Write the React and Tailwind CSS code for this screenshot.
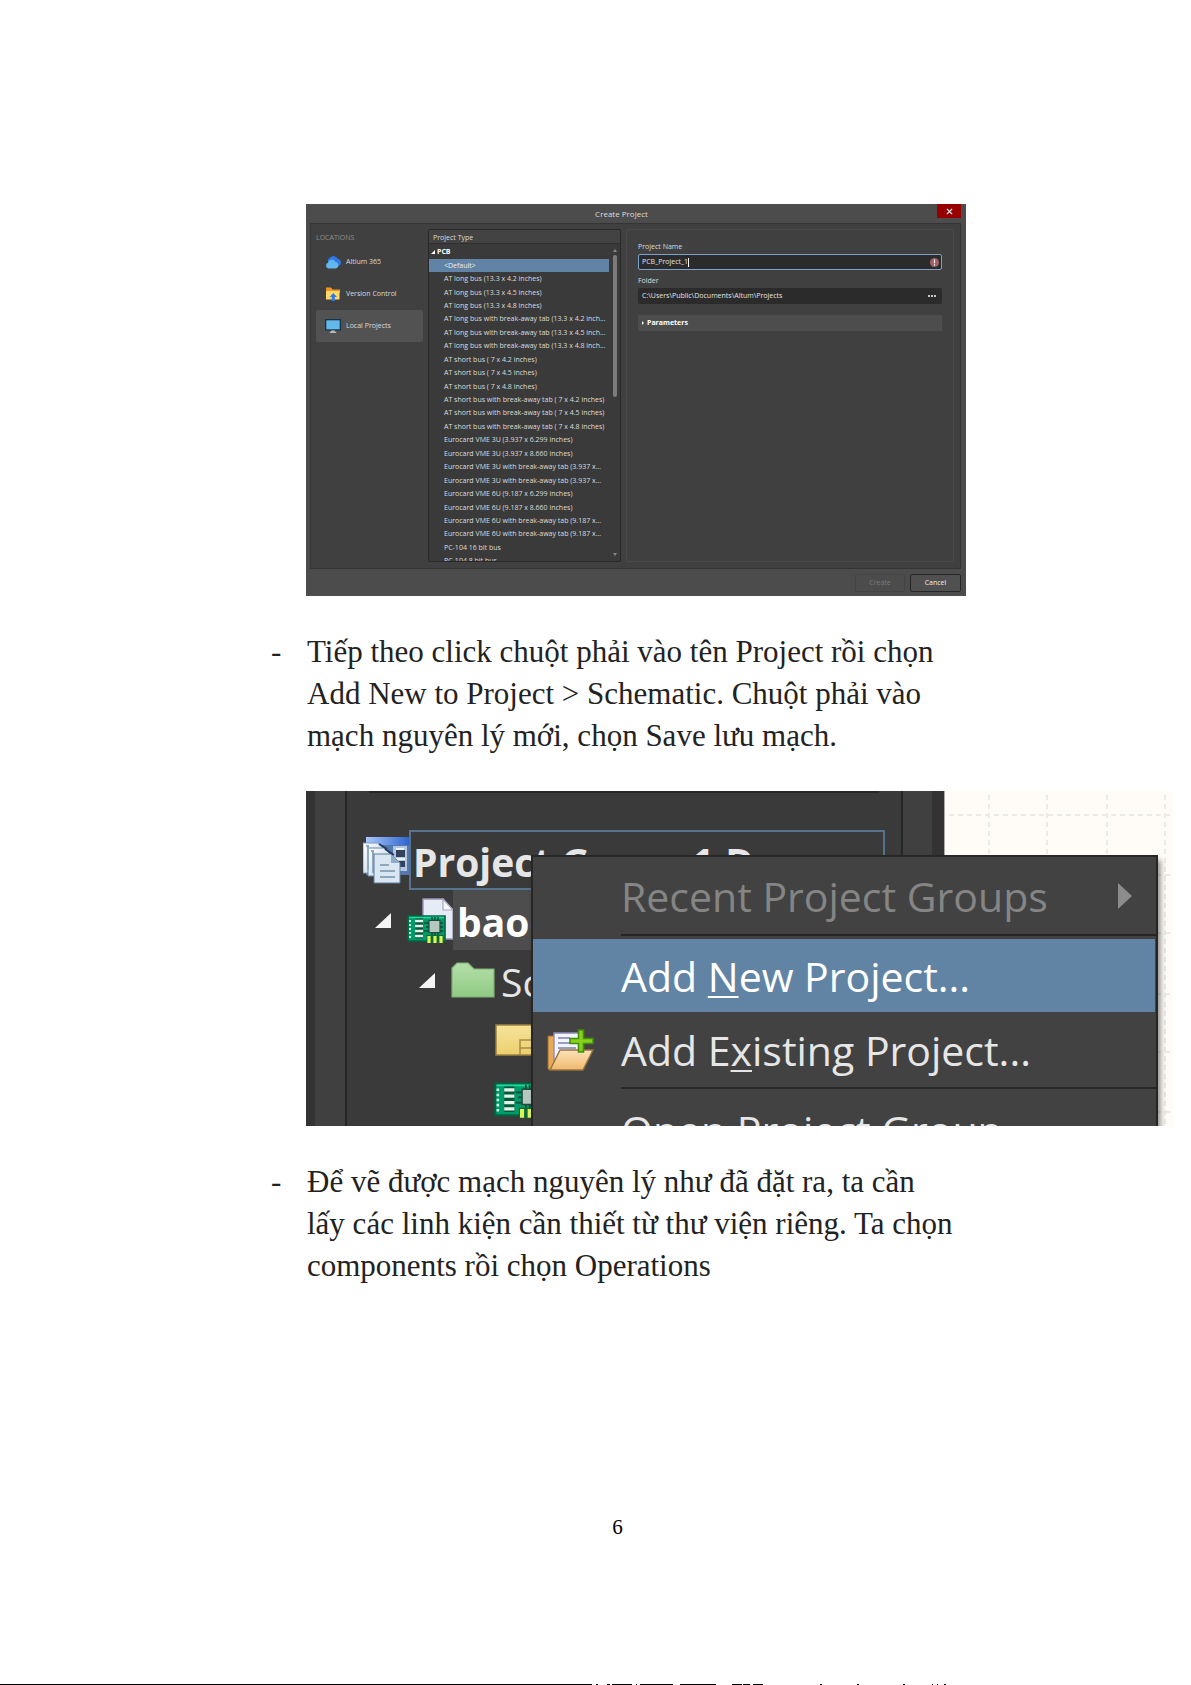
const boards = [
  "AT long bus (13.3 x 4.2 inches)",
  "AT long bus (13.3 x 4.5 inches)",
  "AT long bus (13.3 x 4.8 inches)",
  "AT long bus with break-away tab (13.3 x 4.2 inch...",
  "AT long bus with break-away tab (13.3 x 4.5 inch...",
  "AT long bus with break-away tab (13.3 x 4.8 inch...",
  "AT short bus ( 7 x 4.2 inches)",
  "AT short bus ( 7 x 4.5 inches)",
  "AT short bus ( 7 x 4.8 inches)",
  "AT short bus with break-away tab ( 7 x 4.2 inches)",
  "AT short bus with break-away tab ( 7 x 4.5 inches)",
  "AT short bus with break-away tab ( 7 x 4.8 inches)",
  "Eurocard VME 3U (3.937 x 6.299 inches)",
  "Eurocard VME 3U (3.937 x 8.660 inches)",
  "Eurocard VME 3U with break-away tab (3.937 x...",
  "Eurocard VME 3U with break-away tab (3.937 x...",
  "Eurocard VME 6U (9.187 x 6.299 inches)",
  "Eurocard VME 6U (9.187 x 8.660 inches)",
  "Eurocard VME 6U with break-away tab (9.187 x...",
  "Eurocard VME 6U with break-away tab (9.187 x...",
  "PC-104 16 bit bus",
  "PC-104 8 bit bus",
];

function CloudIcon() {
  return (
    <svg viewBox="0 0 16 14" className="h-[14px] w-4 shrink-0" aria-hidden="true">
      <path d="M4.500 9a3.600 3.600 0 0 1 .6-6.400A4.600 4.600 0 0 1 12.800 4 3.600 3.600 0 0 1 13.500 11H7z" fill="#2f78e6" />
      <path d="M3.200 13.500A3 3 0 0 1 3 7.800 4 4 0 0 1 10.400 6.700 3.500 3.500 0 0 1 11 13.500z" fill="#62b8ee" />
    </svg>
  );
}

function VersionIcon() {
  return (
    <svg viewBox="0 0 16 14" className="h-[14px] w-4 shrink-0" aria-hidden="true">
      <path d="M1 .5h5l1.500 2H15V6H1z" fill="#f0932b" />
      <path d="M1 4h13.500v8.500H1z" fill="#ffd766" />
      <path d="M8.300 6 12 10H9.800v4H6.800v-4H4.600z" fill="#2f7be8" />
    </svg>
  );
}

function MonitorIcon() {
  return (
    <svg viewBox="0 0 16 14" className="h-[14px] w-4 shrink-0" aria-hidden="true">
      <path d="M0 0h16v11.500H0z" fill="#123446" />
      <path d="M1.300 1.300h13.400v9H1.300z" fill="#63b8ec" />
      <path d="M6.300 11.500h3.400l.5 1.300h1V14H4.800v-1.200h1z" fill="#b9b9b9" />
    </svg>
  );
}

function GroupIcon() {
  return (
    <svg viewBox="0 0 47 47" className="-mr-px h-[47px] w-[47px] shrink-0" aria-hidden="true">
      <defs>
        <linearGradient id="bar" x1="0" x2="1">
          <stop offset="0" stopColor="#a9c8ff" />
          <stop offset="1" stopColor="#2d62cc" />
        </linearGradient>
        <linearGradient id="sheet" x1="0" x2="1" y2="1">
          <stop offset="0" stopColor="#fff" />
          <stop offset="1" stopColor="#b9cfe2" />
        </linearGradient>
      </defs>
      <path d="M3 0h44v38H3z" fill="#5379ae" />
      <path d="M3 0h44v8H3z" fill="url(#bar)" />
      <path d="M30 9h14v25H30z" fill="#b7c6e0" />
      <path d="M33 13h9v7h-9zM36 24h6v6h-6z" fill="#33415f" />
      <path d="M33 12h8M31 22h11" stroke="#eef4ff" strokeWidth="2" />
      <path d="M0 6h15l6 6v24H0z" fill="url(#sheet)" stroke="#7f9ab5" />
      <path d="M5 11h16l6 6v22H5z" fill="url(#sheet)" stroke="#6785a5" />
      <path d="M8 14h2v22M3 9h2v24" stroke="#8fa9c2" strokeWidth="2" fill="none" />
      <path d="M11 17h17l9 9v20H11z" fill="#dae7f2" stroke="#5f7d9d" />
      <path d="M28 17v9h9z" fill="#8eabc8" />
      <path d="M16 7l8 5M22 12l9 6" stroke="#243a5c" strokeWidth="2" />
      <path d="M17 28h9M17 34h15M17 40h15" stroke="#90a6bd" strokeWidth="2" />
    </svg>
  );
}

function Chip({ className }) {
  return (
    <svg viewBox="0 0 40 28" className={className} aria-hidden="true">
      <path d="M1 1h37v25H1z" fill="#009a6b" stroke="#00663f" strokeWidth="1.600" />
      <path d="M2 2.500h35" stroke="#25d6a5" strokeWidth="1.400" />
      <path d="M3 5v18" stroke="#caf3df" strokeWidth="2" strokeDasharray="2 2" />
      <path d="M8 6h8M8 11h8M8 16h8M8 21h8" stroke="#005a39" strokeWidth="5" />
      <path d="M8 6h8M8 11h8M8 16h8M8 21h8" stroke="#e2f2ea" strokeWidth="2.600" />
      <path d="M22 8h-5M22 12h-3M22 16h-5M36 8h-3M36 12h-3M36 16h-3M25 6V2M28 6V2M31 6V2M25 18v5M28 18v3M31 18v3" stroke="#004d33" strokeWidth="1.400" />
      <path d="M22 5.500h11v12H22z" fill="#b5c8c0" stroke="#29473c" strokeWidth="1.200" />
      <path d="M19.500 20h17v8h-17z" fill="#0c6b33" />
      <path d="M22 21v7M28 21v7M34 21v7" stroke="#dff25a" strokeWidth="3.200" />
    </svg>
  );
}

function PcbProjectIcon() {
  return (
    <span className="relative block h-[45px] w-[46px] shrink-0">
      <svg viewBox="0 0 46 45" className="h-full w-full" aria-hidden="true">
        <path d="M16 1h20l10 11v29H16z" fill="#e6ebf5" stroke="#9b95b8" strokeWidth="1.400" />
        <path d="M36 1v11h10z" fill="#f8f9ff" stroke="#a7a3c4" strokeWidth="1.200" />
      </svg>
      <Chip className="absolute bottom-0 left-0 h-[28px] w-10" />
    </span>
  );
}

function FolderIcon() {
  return (
    <svg viewBox="0 0 44 36" className="h-9 w-11 shrink-0" aria-hidden="true">
      <defs>
        <linearGradient id="leaf" x1="0" x2="0" y1="0" y2="1">
          <stop offset="0" stopColor="#b5dea9" />
          <stop offset="1" stopColor="#8fcb83" />
        </linearGradient>
      </defs>
      <path d="M1 35V6l5-5h11l6 6h20v28z" fill="url(#leaf)" stroke="#7fae74" strokeWidth="1.200" />
    </svg>
  );
}

function SheetIcon() {
  return (
    <svg viewBox="0 0 46 32" className="h-8 w-[46px] shrink-0" aria-hidden="true">
      <defs>
        <linearGradient id="sand" x1="0" x2="0" y1="0" y2="1">
          <stop offset="0" stopColor="#f6e29a" />
          <stop offset="1" stopColor="#ecd06e" />
        </linearGradient>
      </defs>
      <path d="M1 1h44v30H1z" fill="url(#sand)" stroke="#9a8143" strokeWidth="1.500" />
      <path d="M25 31V16h20M25 24h20" stroke="#a68b47" strokeWidth="1.500" fill="none" />
    </svg>
  );
}

function OpenFolderIcon() {
  return (
    <svg viewBox="0 0 47 42" className="h-[42px] w-[47px]" aria-hidden="true">
      <defs>
        <linearGradient id="manila" x1="0" x2="0" y1="0" y2="1">
          <stop offset="0" stopColor="#fbe3bb" />
          <stop offset="1" stopColor="#eeb96b" />
        </linearGradient>
      </defs>
      <path d="M1 7h7v28l-4 6-3-1z" fill="#e9a959" stroke="#9b6b2e" />
      <path d="M7 4h27v32H7z" fill="#f3f4fc" stroke="#8d8cb8" strokeWidth="1.400" />
      <path d="M11 9h12M11 14h18M11 19h18" stroke="#9a9cc8" strokeWidth="1.800" />
      <path d="M13 21h33L36 41H3z" fill="url(#manila)" stroke="#96713e" strokeWidth="1.400" />
      <path d="M31.500 1h5v8.500H46v5h-9.500V23h-5v-8.500H23v-5h8.500z" fill="#86cf1b" stroke="#438f08" strokeWidth="1.600" />
    </svg>
  );
}

function Expander() {
  return (
    <svg viewBox="0 0 16 15" className="h-[15px] w-4 shrink-0" aria-hidden="true">
      <path d="M16 0v15H0z" fill="#f4f4f4" />
    </svg>
  );
}

function CreateProjectDialog() {
  return (
    <section
      aria-label="Create Project"
      className="flex h-[392px] w-full max-w-[660px] flex-col bg-[#4c4c4c] font-['Open_Sans','Noto_Sans',sans-serif] text-[7px] leading-[10px] text-[#dcdcdc]"
    >
      <header className="flex h-[19px] shrink-0 pr-[5px]">
        <h2 className="flex-1 self-center text-center text-[8px]">Create Project</h2>
        <button type="button" aria-label="Close" className="flex h-[14px] w-6 items-center justify-center bg-[#980000]">
          <svg viewBox="0 0 8 8" className="size-[7px]" aria-hidden="true">
            <path d="m1 1 6 6M7 1 1 7" stroke="#fff" strokeWidth="1.300" />
          </svg>
        </button>
      </header>

      <div className="mx-1 mr-[5px] flex min-h-0 flex-1 border border-[#343434] bg-[#404040]">
        <nav aria-label="Locations" className="w-[117px] shrink-0 px-[5px] pt-[9px]">
          <h3 className="text-[#8f8f8f]">LOCATIONS</h3>
          <ul className="mt-[3px]">
            <li>
              <a href="#altium" className="flex h-8 items-center gap-[5px] pl-[9px]"><CloudIcon />Altium 365</a>
            </li>
            <li>
              <a href="#version" className="flex h-8 items-center gap-[5px] pl-[9px]"><VersionIcon />Version Control</a>
            </li>
            <li>
              <a href="#local" aria-current="page" className="flex h-8 items-center gap-[5px] rounded-[2px] bg-[#525252] pl-[9px]"><MonitorIcon />Local Projects</a>
            </li>
          </ul>
        </nav>

        <div className="mt-[5px] mb-[6px] flex w-[193px] shrink-0 flex-col rounded-[2px] border border-[#282828] bg-[#3a3a3a]">
          <h3 className="h-[14px] shrink-0 border-b border-[#303030] bg-[#434343] pt-[3px] pl-1">Project Type</h3>
          <div className="flex min-h-0 flex-1">
            <div className="min-w-0 flex-1 overflow-hidden">
              <p className="flex h-[15px] items-center gap-[2px] pl-[2px] font-bold text-white">
                <svg viewBox="0 0 4 4" className="size-1" aria-hidden="true"><path d="M4 0v4H0z" fill="#fff" /></svg>
                PCB
              </p>
              <ul className="grid h-[309px] auto-rows-fr">
                <li className="flex items-center bg-[#6183a5] pl-[15px] text-[#eee]">&lt;Default&gt;</li>
                {boards.map((name, i) => (
                  <li key={i} className="flex items-center pl-[15px] whitespace-nowrap">{name}</li>
                ))}
              </ul>
            </div>
            <div aria-hidden="true" className="flex w-[11px] shrink-0 flex-col items-center py-[5px]">
              <svg viewBox="0 0 4 3" className="h-[3px] w-1"><path d="M2 0 4 3H0z" fill="#888" /></svg>
              <div className="mt-[3px] h-[142px] w-1 rounded-full bg-[#7c7c7c]" />
              <svg viewBox="0 0 4 3" className="mt-auto h-[3px] w-1"><path d="M0 0h4L2 3z" fill="#888" /></svg>
            </div>
          </div>
        </div>

        <form className="mt-[5px] mr-[6px] mb-[6px] ml-[5px] flex min-w-0 flex-1 flex-col rounded-[2px] border border-[#4a4a4a] px-[11px] pt-3">
          <label htmlFor="project-name">Project Name</label>
          <div className="mt-[2px] flex h-4 items-center rounded-[2px] border border-[#7ba2c8] bg-[#2b2b2b] pr-[2px] pl-[3px]">
            <span className="flex min-w-0 flex-1 items-center">
              <input id="project-name" defaultValue="PCB_Project_1" className="field-sizing-content bg-transparent text-[#e2e2e2] outline-none" />
              <span aria-hidden="true" className="h-[9px] w-px bg-white" />
            </span>
            <svg viewBox="0 0 10 10" className="size-[9px]" role="img" aria-label="Error">
              <circle cx="5" cy="5" r="5" fill="#a06064" />
              <path d="M5 1.800v4M5 7v1.400" stroke="#fff" strokeWidth="1.300" />
            </svg>
          </div>
          <label htmlFor="project-folder" className="mt-[6px]">Folder</label>
          <div className="mt-[2px] flex h-4 items-center rounded-[2px] bg-[#2b2b2b] pr-[6px] pl-1">
            <input id="project-folder" defaultValue={"C:\\Users\\Public\\Documents\\Altum\\Projects"} className="min-w-0 flex-1 bg-transparent text-[#e2e2e2] outline-none" />
            <button type="button" aria-label="Browse" className="flex gap-px">
              <span className="size-[2px] rounded-full bg-white" />
              <span className="size-[2px] rounded-full bg-white" />
              <span className="size-[2px] rounded-full bg-white" />
            </button>
          </div>
          <button type="button" className="mt-[11px] flex h-4 items-center gap-[3px] bg-[#4d4d4d] pl-1 font-bold text-white">
            <svg viewBox="0 0 2 4" className="h-1 w-[2px]" aria-hidden="true"><path d="M0 0l2 2-2 2z" fill="#fff" /></svg>
            Parameters
          </button>
        </form>
      </div>

      <footer className="flex h-[27px] shrink-0 items-center justify-end gap-[5px] pt-px pr-[5px]">
        <button type="button" disabled className="h-[18px] w-[50px] rounded-[2px] border border-[#434343] text-[#7b7b7b]">Create</button>
        <button type="button" className="h-[18px] w-[51px] rounded-[2px] border border-[#262626] bg-[#505050] text-[#eee]">Cancel</button>
      </footer>
    </section>
  );
}

function ProjectMenu() {
  return (
    <div
      role="menu"
      className="absolute top-16 left-[225px] flex w-[627px] flex-col border-2 border-[#262626] bg-[#424242] text-[41px] text-[#e6e6e6] shadow-[3px_5px_5px_rgba(0,0,0,0.4)]"
    >
      <button type="button" role="menuitem" disabled className="flex h-[77px] items-center justify-between pr-6 pl-[88px] text-[#858585]">
        Recent Project Groups
        <svg viewBox="0 0 14 26" className="h-[26px] w-[14px]" aria-hidden="true"><path d="M0 0l14 13L0 26z" fill="#8c8c8c" /></svg>
      </button>
      <hr className="mb-[3px] ml-[88px] border-t-2 border-[#262626]" />
      <button type="button" role="menuitem" className="mr-px flex h-[73px] items-center bg-[#6284a4] pl-[88px] text-white">
        <span>Add <span className="underline decoration-2 underline-offset-4">N</span>ew Project...</span>
      </button>
      <button type="button" role="menuitem" className="flex h-[75px] items-center">
        <span className="flex w-[88px] shrink-0 pl-[14px]"><OpenFolderIcon /></span>
        <span>Add E<span className="underline decoration-2 underline-offset-4">x</span>isting Project...</span>
      </button>
      <hr className="ml-[88px] border-t-2 border-[#262626]" />
      <button type="button" role="menuitem" className="flex h-[78px] items-center pt-1 pl-[88px]">Open Project Group...</button>
    </div>
  );
}

function ContextMenuFigure() {
  return (
    <section
      aria-label="Projects panel"
      className="relative flex h-[335px] w-full max-w-[867px] overflow-hidden bg-[#fffcf8] font-['Open_Sans','Noto_Sans',sans-serif]"
    >
      <div className="w-[9px] shrink-0 bg-[#333]" />
      <div className="w-[30px] shrink-0 bg-[#404040]" />
      <div className="w-[558px] shrink-0 border-x-2 border-[#262626] bg-[#3a3a3a]">
        <div className="mx-[22px] h-[2px] bg-[#262626]" />
        <div className="mt-[37px] ml-4 flex h-[60px] items-center">
          <GroupIcon />
          <div className="flex h-[60px] w-[476px] items-center border-2 border-[#56728f] pt-1 pl-[2px] text-[39px] font-bold whitespace-nowrap text-[#e6e6e6]">
            Project Group 1.D...
          </div>
        </div>
        <div className="flex h-[60px] items-center pl-7">
          <Expander />
          <span className="ml-4"><PcbProjectIcon /></span>
          <div className="flex h-[60px] flex-1 items-center bg-[#4d4d4d] pt-1 pl-1 text-[39px] font-bold text-white">baoc</div>
        </div>
        <div className="flex h-[60px] items-center pl-[72px]">
          <Expander />
          <span className="ml-4"><FolderIcon /></span>
          <span className="ml-[6px] pt-1 text-[39px] text-[#e6e6e6]">Sc</span>
        </div>
        <div className="flex h-[60px] items-center pl-[148px]"><SheetIcon /></div>
        <div className="flex h-[60px] items-center pl-[147px]"><Chip className="h-[36px] w-[51px] shrink-0" /></div>
      </div>
      <div className="w-[29px] shrink-0 bg-[#404040]" />
      <div className="w-3 shrink-0 bg-[#333]" />
      <div className="h-full flex-1 border-l border-[#aaa]">
        <svg className="h-full w-full" aria-hidden="true">
          <g stroke="#ebeae7" strokeWidth="2" strokeDasharray="5 4">
            <path d="M4 24H240M4 84H240M4 142H240M4 203H240M4 261H240M4 321H240" />
            <path d="M44 4V335M102 4V335M162 4V335M220 4V335" />
          </g>
        </svg>
      </div>
      <ProjectMenu />
    </section>
  );
}

function Note({ lines }) {
  return (
    <li className="grid grid-cols-[36px_1fr]">
      <span aria-hidden="true">-</span>
      <p>
        {lines.map((line) => (
          <span key={line} className="block">{line}</span>
        ))}
      </p>
    </li>
  );
}

const marks = [
  [0, 592], [596, 598], [607, 610], [612, 632], [636, 637], [640, 673], [680, 716], [732, 742],
  [743, 750], [753, 763], [820, 822], [857, 859], [903, 905], [932, 933], [937, 938], [944, 946],
];

export default function App() {
  return (
    <main className="flex min-h-screen flex-col bg-white font-['Liberation_Serif',serif] text-[31px] leading-[42px] text-[#222]">
      <div className="pt-[204px] pr-[18px] pl-[271px]">
        <div className="pl-[35px]"><CreateProjectDialog /></div>
        <ul className="mt-[35px]">
          <Note
            lines={[
              "Tiếp theo click chuột phải vào tên Project rồi chọn",
              "Add New to Project > Schematic. Chuột phải vào",
              "mạch nguyên lý mới, chọn Save lưu mạch.",
            ]}
          />
        </ul>
        <div className="mt-[34px] pl-[35px]"><ContextMenuFigure /></div>
        <ul className="mt-[35px]">
          <Note
            lines={[
              "Để vẽ được mạch nguyên lý như đã đặt ra, ta cần",
              "lấy các linh kiện cần thiết từ thư viện riêng. Ta chọn",
              "components rồi chọn Operations",
            ]}
          />
        </ul>
      </div>
      <footer className="mt-auto">
        <p className="mb-[145px] pl-11 text-center text-[21px] leading-6 text-black">6</p>
        <svg className="block h-px w-full" aria-hidden="true">
          {marks.map(([from, to]) => (
            <rect key={from} x={from} y="0" width={to - from} height="1" />
          ))}
        </svg>
      </footer>
    </main>
  );
}
